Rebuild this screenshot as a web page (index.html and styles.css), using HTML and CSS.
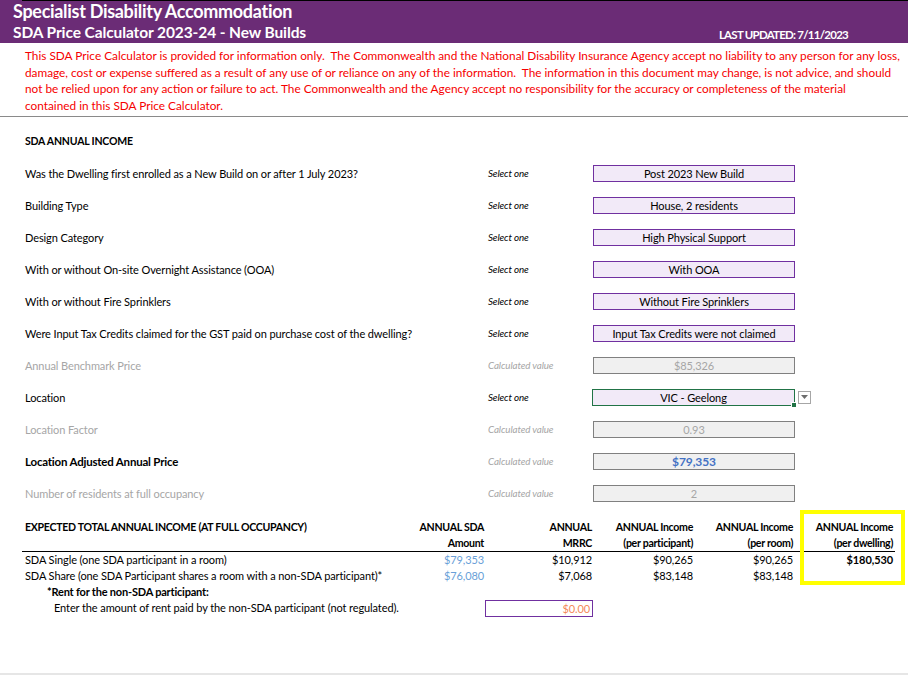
FILE: index.html
```html
<!DOCTYPE html>
<html lang="en">
<head>
<meta charset="utf-8">
<title>SDA Price Calculator 2023-24 - New Builds</title>
<link rel="stylesheet" href="styles.css">
</head>
<body>
<header class="banner">
  <h1 class="title">Specialist Disability Accommodation</h1>
  <div class="sub-row">
    <h2 class="subtitle">SDA Price Calculator 2023-24 - New Builds</h2>
    <span class="updated">LAST UPDATED: 7/11/2023</span>
  </div>
</header>

<p class="disclaimer">This SDA Price Calculator is provided for information only.&nbsp; The Commonwealth and the National Disability Insurance Agency accept no liability to any person for any loss,<br>damage, cost or expense suffered as a result of any use of or reliance on any of the information.&nbsp; The information in this document may change, is not advice, and should<br>not be relied upon for any action or failure to act. The Commonwealth and the Agency accept no responsibility for the accuracy or completeness of the material<br>contained in this SDA Price Calculator.</p>

<section class="income">
  <h3 class="section-title">SDA ANNUAL INCOME</h3>
  <div class="form">
    <div class="row">
      <span class="label">Was the Dwelling first enrolled as a New Build on or after 1 July 2023?</span>
      <span class="hint">Select one</span>
      <span class="box select">Post 2023 New Build</span>
    </div>
    <div class="row">
      <span class="label">Building Type</span>
      <span class="hint">Select one</span>
      <span class="box select">House, 2 residents</span>
    </div>
    <div class="row">
      <span class="label">Design Category</span>
      <span class="hint">Select one</span>
      <span class="box select">High Physical Support</span>
    </div>
    <div class="row">
      <span class="label">With or without On-site Overnight Assistance (OOA)</span>
      <span class="hint">Select one</span>
      <span class="box select">With OOA</span>
    </div>
    <div class="row">
      <span class="label">With or without Fire Sprinklers</span>
      <span class="hint">Select one</span>
      <span class="box select">Without Fire Sprinklers</span>
    </div>
    <div class="row">
      <span class="label">Were Input Tax Credits claimed for the GST paid on purchase cost of the dwelling?</span>
      <span class="hint">Select one</span>
      <span class="box select">Input Tax Credits were not claimed</span>
    </div>
    <div class="row">
      <span class="label muted">Annual Benchmark Price</span>
      <span class="hint muted">Calculated value</span>
      <span class="box calc">$85,326</span>
    </div>
    <div class="row">
      <span class="label">Location</span>
      <span class="hint">Select one</span>
      <span class="box select active">VIC - Geelong</span>
      <span class="dropdown"><svg width="7" height="4" viewBox="0 0 7 4"><path d="M0 0H7L3.5 4Z" fill="#6d6d6d"/></svg></span>
    </div>
    <div class="row">
      <span class="label muted">Location Factor</span>
      <span class="hint muted">Calculated value</span>
      <span class="box calc">0.93</span>
    </div>
    <div class="row">
      <span class="label strong">Location Adjusted Annual Price</span>
      <span class="hint muted">Calculated value</span>
      <span class="box calc highlight">$79,353</span>
    </div>
    <div class="row">
      <span class="label muted">Number of residents at full occupancy</span>
      <span class="hint muted">Calculated value</span>
      <span class="box calc">2</span>
    </div>
  </div>
</section>

<section class="totals">
  <div class="head first">EXPECTED TOTAL ANNUAL INCOME (AT FULL OCCUPANCY)</div>
  <div class="head num">ANNUAL SDA<br>Amount</div>
  <div class="head num">ANNUAL<br>MRRC</div>
  <div class="head num">ANNUAL Income<br>(per participant)</div>
  <div class="head num">ANNUAL Income<br>(per room)</div>
  <div class="head num focus">ANNUAL Income<br>(per dwelling)</div>

  <div class="cell first">SDA Single (one SDA participant in a room)</div>
  <div class="cell num blue">$79,353</div>
  <div class="cell num">$10,912</div>
  <div class="cell num">$90,265</div>
  <div class="cell num">$90,265</div>
  <div class="cell num bold">$180,530</div>

  <div class="cell first">SDA Share (one SDA Participant shares a room with a non-SDA participant)*</div>
  <div class="cell num blue">$76,080</div>
  <div class="cell num">$7,068</div>
  <div class="cell num">$83,148</div>
  <div class="cell num">$83,148</div>
  <div class="cell"></div>

  <div class="note">*Rent for the non-SDA participant:</div>
  <div class="enter">Enter the amount of rent paid by the non-SDA participant (not regulated).</div>
  <div class="rent">$0.00</div>
</section>

<footer class="sheet-end"></footer>
</body>
</html>
```

FILE: styles.css
```css
* { box-sizing: border-box; }

html, body {
  margin: 0;
  padding: 0;
}

body {
  width: 908px;
  height: 675px;
  overflow: hidden;
  background: #ffffff;
  font-family: Lato, "Liberation Sans", sans-serif;
  font-size: 11px;
  letter-spacing: -0.1px;
  color: #000000;
  display: flex;
  flex-direction: column;
}

/* ---------- banner ---------- */
.banner {
  height: 43px;
  padding-left: 13px;
  padding-right: 60px;
  background: linear-gradient(#000, #000) 22px 0 / 100% 1px no-repeat, #6b2c76;
  color: #ffffff;
}

.title {
  margin: 0;
  font-size: 18px;
  font-weight: 700;
  line-height: 22px;
  letter-spacing: -0.3px;
}

.sub-row {
  display: flex;
  justify-content: space-between;
  align-items: baseline;
}

.subtitle {
  margin: 0;
  font-size: 15.5px;
  font-weight: 700;
  line-height: 21px;
  letter-spacing: -0.1px;
}

.updated {
  font-size: 11.5px;
  font-weight: 700;
  letter-spacing: -0.75px;
  position: relative;
  top: 1px;
}

/* ---------- disclaimer ---------- */
.disclaimer {
  margin: 0;
  height: 74px;
  padding: 5px 0 0 25px;
  border-bottom: 1px solid #8a8a8a;
  color: #f60000;
  font-size: 11.82px;
  line-height: 16.7px;
  letter-spacing: 0;
  white-space: nowrap;
}

/* ---------- income form ---------- */
.income {
  padding: 16px 0 0 25px;
}

.section-title {
  margin: 0 0 8px;
  font-size: 10.5px;
  font-weight: 700;
  line-height: 16px;
  letter-spacing: -0.2px;
}

.form {
  display: flex;
  flex-direction: column;
}

.row {
  height: 32px;
  display: grid;
  grid-template-columns: 463px 105px 203px 15px;
  align-items: center;
}

.label { white-space: nowrap; }
.label.muted { color: #a6a6a6; }
.label.strong { font-weight: 700; font-size: 11.5px; letter-spacing: -0.2px; }

.hint {
  font-style: italic;
  font-size: 9.8px;
  color: #000;
}
.hint.muted { color: #a6a6a6; }

.box {
  height: 17px;
  line-height: 15px;
  text-align: center;
  white-space: nowrap;
}

.select {
  background: #f2eaf8;
  border: 1px solid #7030a0;
  margin-right: 1px;
  position: relative;
}

.select.active {
  border-color: #217346;
  margin-left: -1px;
  margin-right: 1px;
}

.select.active::after {
  content: "";
  position: absolute;
  right: -3px;
  bottom: -3px;
  width: 4px;
  height: 4px;
  background: #217346;
  border: 1px solid #fff;
}

.calc {
  background: #f0f0f0;
  border: 1px solid #808080;
  margin-right: 1px;
  color: #a6a6a6;
}

.calc.highlight {
  color: #4472c4;
  font-weight: 700;
  font-size: 12px;
}

.dropdown {
  margin-left: 2px;
  width: 13px;
  height: 13px;
  border: 1px solid #a6a6a6;
  background: #fff;
  display: flex;
  align-items: center;
  justify-content: center;
}

/* ---------- totals ---------- */
.totals {
  margin-top: 9px;
  margin-left: 22px;
  display: grid;
  grid-template-columns: 364px 100px 108px 101px 100px 100px;
  grid-template-rows: 34px;
  grid-auto-rows: 16px;
  line-height: 16px;
}

.head {
  padding-top: 1px;
  font-weight: 700;
  font-size: 10.6px;
  letter-spacing: -0.3px;
  border-bottom: 1px solid #000;
  white-space: nowrap;
}

.first { padding-left: 3px; white-space: nowrap; }

.num {
  text-align: right;
  padding-right: 2px;
}

.cell { white-space: nowrap; }
.cell.blue { color: #6a9fd8; }
.cell.bold { font-weight: 700; }

.focus {
  position: relative;
}

.focus::after {
  content: "";
  position: absolute;
  top: -8px;
  left: 5px;
  right: -10px;
  height: 67px;
  border: 4px solid #ffff00;
}

.note {
  grid-column: 1 / span 6;
  padding-left: 25px;
  font-weight: 700;
  letter-spacing: -0.2px;
}

.enter {
  grid-column: 1 / span 2;
  padding-left: 32px;
  white-space: nowrap;
  height: 17px;
}

.rent {
  grid-column: 3;
  height: 17px;
  margin-left: -1px;
  margin-right: 1px;
  border: 1px solid #7030a0;
  color: #f4895a;
  text-align: right;
  padding-right: 2px;
  line-height: 15px;
}

.sheet-end {
  margin-top: auto;
  height: 2px;
  background: #e6e6e6;
}
```
